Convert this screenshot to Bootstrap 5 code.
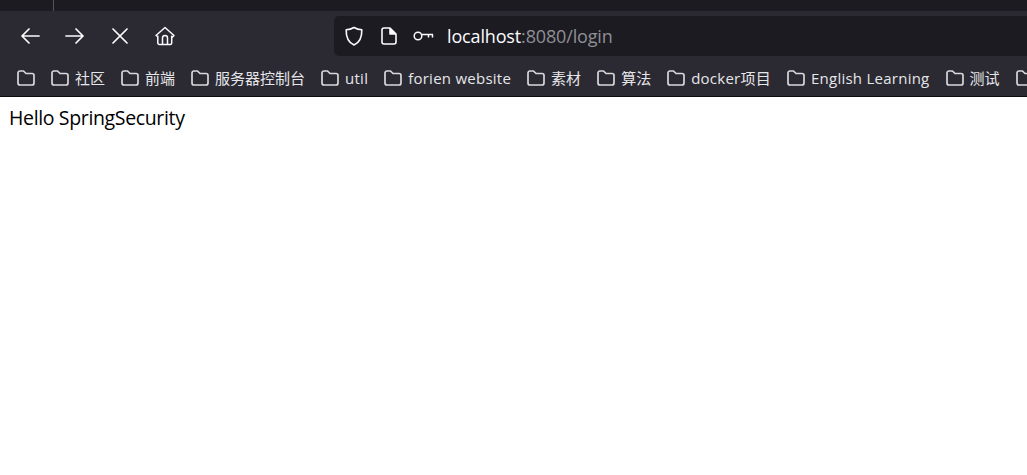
<!DOCTYPE html>
<html lang="zh-CN">
<head>
    <meta charset="UTF-8">
    <title>localhost:8080/login</title>
    <link href="https://cdn.jsdelivr.net/npm/bootstrap@5.3.0/dist/css/bootstrap.min.css" rel="stylesheet">
    <style>
        body { background: #fff; overflow: hidden; font-family: "Open Sans", "Noto Sans CJK SC", sans-serif; }
        .tab-strip { height: 11px; background: #1c1b22; padding-left: 53px; }
        .tab-sep { width: 1px; height: 11px; background: #55545c; }
        .tool-row { height: 49px; background: #2b2a33; padding-top: 5px; }
        .tool-btns { width: 334px; padding-left: 19px; gap: 23px; height: 40px; }
        .url-box { height: 40px; background: #1c1b22; border-radius: 5px 0 0 5px; padding-left: 9px; }
        .url-text { font-size: 18px; color: #fbfbfe; margin-left: 13px; letter-spacing: -.15px; }
        .url-dim { color: #8f8f94; }
        .mark-row { height: 37px; background: #2b2a33; border-bottom: 1px solid #0c0c0d; padding-left: 17px; gap: 16px; white-space: nowrap; overflow: hidden; }
        .mark-item { gap: 6px; font-size: 15px; color: #e6e6e9; flex-shrink: 0; }
        .mark-item svg { flex-shrink: 0; }
        .mark-latin { letter-spacing: .25px; }
        .page-text { margin: 8px 0 0 9px; font-size: 19.5px; color: #000; letter-spacing: -.35px; line-height: 26px; }
    </style>
</head>
<body>

<div class="tab-strip"><div class="tab-sep"></div></div>

<div class="tool-row d-flex">
    <div class="tool-btns d-flex align-items-center flex-shrink-0">
        <svg width="22" height="22" viewBox="0 0 22 22" fill="none" stroke="#fbfbfe" stroke-width="1.7" stroke-linecap="round" stroke-linejoin="round"><path d="M20 11H3M10 4l-7 7 7 7"/></svg>
        <svg width="22" height="22" viewBox="0 0 22 22" fill="none" stroke="#fbfbfe" stroke-width="1.7" stroke-linecap="round" stroke-linejoin="round"><path d="M2 11h17M12 4l7 7-7 7"/></svg>
        <svg width="22" height="22" viewBox="0 0 22 22" fill="none" stroke="#fbfbfe" stroke-width="1.7" stroke-linecap="round"><path d="M4 4l14 14M18 4L4 18"/></svg>
        <svg width="22" height="22" viewBox="0 0 22 22" fill="none" stroke="#fbfbfe" stroke-width="1.5" stroke-linejoin="round"><path d="M2 10.500L11 2.500l9 8-1.500 1.500-.8-.7V18a1.500 1.500 0 0 1-1.500 1.500H5.300A1.500 1.500 0 0 1 3.800 18v-6.700l-.3.200z"/><path d="M8.500 19.500V13a2.500 2.500 0 0 1 5 0v6.500"/></svg>
    </div>
    <div class="url-box flex-grow-1 d-flex align-items-center">
        <svg width="22" height="22" viewBox="0 0 22 22" fill="none" stroke="#fbfbfe" stroke-width="1.600" stroke-linejoin="round"><path d="M11 2.500c2.500 1.500 5 2.200 7.800 2.300C19 12 17 17.500 11 20 5 17.500 3 12 3.200 4.800 6 4.700 8.500 4 11 2.500z"/></svg>
        <svg class="ms-3" width="16" height="18" viewBox="0 0 16 18" fill="none" stroke="#fbfbfe" stroke-width="1.600" stroke-linejoin="round"><path d="M3 1h6l6 6v8a2 2 0 0 1-2 2H3a2 2 0 0 1-2-2V3a2 2 0 0 1 2-2z"/><path d="M9 1v6h6" fill="#fbfbfe"/></svg>
        <svg class="ms-3" width="21" height="12" viewBox="0 0 21 12" fill="none" stroke="#fbfbfe" stroke-width="1.500"><circle cx="5" cy="6" r="3.800"/><path d="M9 4.500h11M15.500 4.500v3M19.500 4.500v3"/></svg>
        <span class="url-text">localhost<span class="url-dim">:8080/login</span></span>
    </div>
</div>

<div class="mark-row d-flex align-items-center" id="marks"></div>

<div class="page-text">Hello SpringSecurity</div>

<script>
// bookmarks toolbar
const marks = ['', '社区', '前端', '服务器控制台', 'util', 'forien website', '素材', '算法', 'docker项目', 'English Learning', '测试', ''];
const folder = '<svg width="18" height="16" viewBox="0 0 18 16" fill="none" stroke="#d8d8db" stroke-width="1.700" stroke-linejoin="round"><path d="M1 3a2 2 0 0 1 2-2h3.500l2.500 2.500h6a2 2 0 0 1 2 2V13a2 2 0 0 1-2 2H3a2 2 0 0 1-2-2z"/></svg>';
document.getElementById('marks').innerHTML = marks.map(m =>
    `<div class="mark-item d-flex align-items-center">${folder}${m ? `<span class="${/[a-z]/i.test(m) ? 'mark-latin' : ''}">${m}</span>` : ''}</div>`
).join('');
</script>

</body>
</html>
